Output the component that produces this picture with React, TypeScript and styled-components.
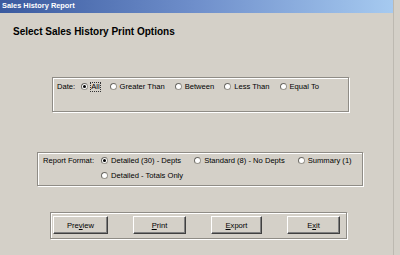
import React from 'react';
import styled, { createGlobalStyle } from 'styled-components';

const Global = createGlobalStyle`
  html, body { margin: 0; padding: 0; background: #d4d0c8; }
  body {
    width: 400px; height: 255px; overflow: hidden;
    font-family: "Liberation Sans", Arial, sans-serif;
    color: #000;
  }
`;

const Window = styled.div`
  width: 393px;
  height: 255px;
  display: flex;
  flex-direction: column;
  background: #d4d0c8;
  border-right: 1px solid #bdb9b1;
`;

const TitleBar = styled.div`
  height: 13px;
  background: linear-gradient(to right, #3a5a9f 0%, #6f8fcb 50%, #a6caf0 100%);
  color: #fff;
  font-weight: bold;
  font-size: 7.4px;
  line-height: 12px;
  padding-left: 2px;
  white-space: nowrap;
`;

const Content = styled.div`
  display: flex;
  flex-direction: column;
  align-items: flex-start;
`;

const Heading = styled.h1`
  margin: 13px 0 0 13px;
  font-size: 10px;
  line-height: 12px;
  font-weight: bold;
`;

const GroupBox = styled.div<{ $left: number; $top: number; $width: number; $height: number; $pad: string }>`
  box-sizing: border-box;
  margin: ${p => p.$top}px 0 0 ${p => p.$left}px;
  width: ${p => p.$width}px;
  height: ${p => p.$height}px;
  padding: ${p => p.$pad};
  border: 1px solid #8f8c86;
  box-shadow: inset 1px 1px 0 #fff, 1px 1px 0 #fff;
  display: flex;
  align-items: flex-start;
  font-size: 7.6px;
  line-height: 11px;
`;

const FieldLabel = styled.span<{ $gap: number }>`
  margin-right: ${p => p.$gap}px;
  white-space: nowrap;
`;

const Options = styled.div<{ $width: number; $gap: number }>`
  display: flex;
  flex-wrap: wrap;
  width: ${p => p.$width}px;
  column-gap: ${p => p.$gap}px;
  row-gap: 4px;
`;

const Option = styled.label`
  display: flex;
  align-items: center;
  white-space: nowrap;
  height: 11px;
`;

const Radio = styled.span<{ $checked?: boolean }>`
  box-sizing: border-box;
  width: 7px;
  height: 7px;
  border-radius: 50%;
  background: #fff;
  border: 1px solid #9a978f;
  border-top-color: #6b6964;
  border-left-color: #6b6964;
  margin-right: 2px;
  display: flex;
  align-items: center;
  justify-content: center;
  &::after {
    content: '';
    width: 3px;
    height: 3px;
    border-radius: 50%;
    background: ${p => (p.$checked ? '#000' : 'transparent')};
  }
`;

const OptText = styled.span<{ $focus?: boolean }>`
  padding: 0 1px;
  outline: ${p => (p.$focus ? '1px dotted #333' : 'none')};
  outline-offset: -1px;
  line-height: 10px;
`;

const ButtonFrame = styled.div`
  box-sizing: border-box;
  margin: 26px 0 0 50px;
  width: 297px;
  height: 27px;
  padding: 3px 0 0 2px;
  border: 1px solid #8f8c86;
  box-shadow: inset 1px 1px 0 #fff, 1px 1px 0 #fff;
  display: flex;
  align-items: flex-start;
  gap: 25px;
`;

const Button = styled.button<{ $width: number }>`
  box-sizing: border-box;
  width: ${p => p.$width}px;
  height: 18px;
  padding: 0;
  background: #d4d0c8;
  font-family: "Liberation Sans", Arial, sans-serif;
  font-size: 7.6px;
  color: #000;
  border: 1px solid;
  border-color: #fff #404040 #404040 #fff;
  box-shadow: inset -1px -1px 0 #808080;
  display: flex;
  align-items: center;
  justify-content: center;
  u { text-decoration: underline; }
`;

type Opt = { label: string; checked?: boolean; focus?: boolean };

const RadioOption = ({ label, checked, focus }: Opt) => (
  <Option>
    <Radio $checked={checked} />
    <OptText $focus={focus}>{label}</OptText>
  </Option>
);

export default function App() {
  const dateOpts: Opt[] = [
    { label: 'All', checked: true, focus: true },
    { label: 'Greater Than' },
    { label: 'Between' },
    { label: 'Less Than' },
    { label: 'Equal To' },
  ];
  const fmtOpts: Opt[] = [
    { label: 'Detailed (30) - Depts', checked: true },
    { label: 'Standard (8) - No Depts' },
    { label: 'Summary (1)' },
    { label: 'Detailed - Totals Only' },
  ];
  return (
    <>
      <Global />
      <Window>
        <TitleBar>Sales History Report</TitleBar>
        <Content>
          <Heading>Select Sales History Print Options</Heading>
          <GroupBox $left={52} $top={39} $width={297} $height={35} $pad="3px 0 0 4px">
            <FieldLabel $gap={6}>Date:</FieldLabel>
            <Options $width={280} $gap={9}>
              {dateOpts.map(o => (
                <RadioOption key={o.label} {...o} />
              ))}
            </Options>
          </GroupBox>
          <GroupBox $left={37} $top={40} $width={326} $height={34} $pad="2px 0 0 5px">
            <FieldLabel $gap={7}>Report Format:</FieldLabel>
            <Options $width={255} $gap={12}>
              {fmtOpts.map(o => (
                <RadioOption key={o.label} {...o} />
              ))}
            </Options>
          </GroupBox>
          <ButtonFrame>
            <Button $width={55}>Pre<u>v</u>iew</Button>
            <Button $width={53}><u>P</u>rint</Button>
            <Button $width={51}><u>E</u>xport</Button>
            <Button $width={53}>E<u>x</u>it</Button>
          </ButtonFrame>
        </Content>
      </Window>
    </>
  );
}
